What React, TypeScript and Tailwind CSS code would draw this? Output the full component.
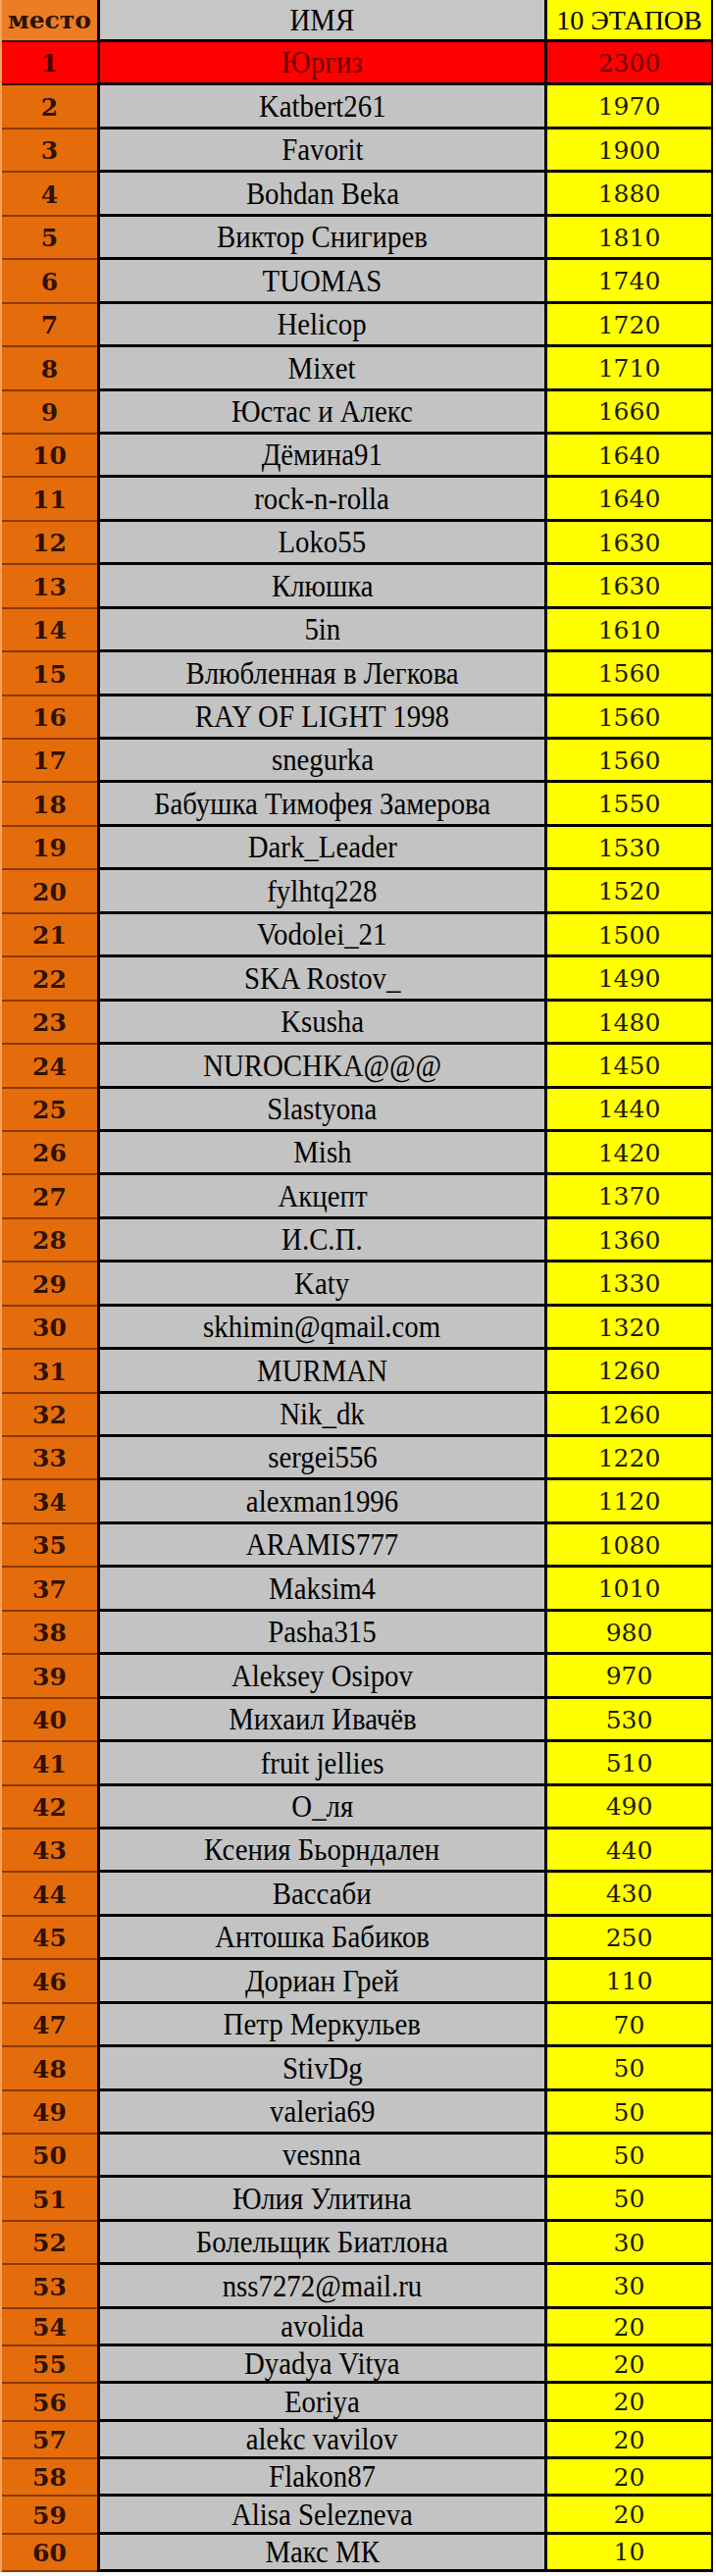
const rows: [number, string, number][] = [
  [1, 'Юргиз', 2300],
  [2, 'Katbert261', 1970],
  [3, 'Favorit', 1900],
  [4, 'Bohdan Beka', 1880],
  [5, 'Виктор Снигирев', 1810],
  [6, 'TUOMAS', 1740],
  [7, 'Helicop', 1720],
  [8, 'Mixet', 1710],
  [9, 'Юстас и Алекс', 1660],
  [10, 'Дёмина91', 1640],
  [11, 'rock-n-rolla', 1640],
  [12, 'Loko55', 1630],
  [13, 'Клюшка', 1630],
  [14, '5in', 1610],
  [15, 'Влюбленная в Легкова', 1560],
  [16, 'RAY OF LIGHT 1998', 1560],
  [17, 'snegurka', 1560],
  [18, 'Бабушка Тимофея Замерова', 1550],
  [19, 'Dark_Leader', 1530],
  [20, 'fylhtq228', 1520],
  [21, 'Vodolei_21', 1500],
  [22, 'SKA Rostov_', 1490],
  [23, 'Ksusha', 1480],
  [24, 'NUROCHKA@@@', 1450],
  [25, 'Slastyona', 1440],
  [26, 'Mish', 1420],
  [27, 'Акцепт', 1370],
  [28, 'И.С.П.', 1360],
  [29, 'Katy', 1330],
  [30, 'skhimin@qmail.com', 1320],
  [31, 'MURMAN', 1260],
  [32, 'Nik_dk', 1260],
  [33, 'sergei556', 1220],
  [34, 'alexman1996', 1120],
  [35, 'ARAMIS777', 1080],
  [37, 'Maksim4', 1010],
  [38, 'Pasha315', 980],
  [39, 'Aleksey Osipov', 970],
  [40, 'Михаил Ивачёв', 530],
  [41, 'fruit jellies', 510],
  [42, 'О_ля', 490],
  [43, 'Ксения Бьорндален', 440],
  [44, 'Вассаби', 430],
  [45, 'Антошка Бабиков', 250],
  [46, 'Дориан Грей', 110],
  [47, 'Петр Меркульев', 70],
  [48, 'StivDg', 50],
  [49, 'valeria69', 50],
  [50, 'vesnna', 50],
  [51, 'Юлия Улитина', 50],
  [52, 'Болельщик Биатлона', 30],
  [53, 'nss7272@mail.ru', 30],
  [54, 'avolida', 20],
  [55, 'Dyadya Vitya', 20],
  [56, 'Eoriya', 20],
  [57, 'alekc vavilov', 20],
  [58, 'Flakon87', 20],
  [59, 'Alisa Selezneva', 20],
  [60, 'Макс МК', 10],
];

function Row({ place, name, score }: { place: number; name: string; score: number }) {
  const leader = place === 1;
  const small = place >= 54;
  return (
    <div className={`flex ${small ? 'h-[38.3px]' : 'h-[44.45px]'}`}>
      {/* место */}
      <div
        className={`w-[97px] flex items-center justify-center pt-[2px] border-b-2 font-['DejaVu_Serif',serif] font-bold text-[25px] ${
          leader ? 'bg-[#fe0000] border-[#3a0000] text-[#4a0000]' : 'bg-[#e46c0a] border-[#8a3a05] text-[#2e1204]'
        }`}
      >
        {place}
      </div>
      <div className="w-[3px] bg-black" />
      {/* имя */}
      <div
        className={`flex-1 flex items-center justify-center pt-[2px] border-b-[3px] border-black text-[31px] ${
          leader ? 'bg-[#fe0000] text-[#6b0000]' : 'bg-[#c3c3c3] text-black'
        }`}
      >
        <span className="inline-block whitespace-nowrap scale-x-[0.93]">{name}</span>
      </div>
      <div className="w-[3px] bg-black" />
      {/* очки */}
      <div
        className={`w-[167px] flex items-center justify-center pt-[2px] border-b-[3px] border-black font-['DejaVu_Serif',serif] text-[25px] ${
          leader ? 'bg-[#fe0000] text-[#6b0000]' : 'bg-[#ffff00] text-[#1a1a00]'
        }`}
      >
        {score}
      </div>
      <div className="w-[2px] bg-black" />
    </div>
  );
}

export default function App() {
  return (
    <div className="w-[730px] min-h-[2626px] bg-white font-['Liberation_Serif','DejaVu_Serif',serif]">
      <div className="w-[727px] border-l-2 border-[#f3a560]">
        <div className="flex h-[43px]">
          <div className="w-[97px] flex items-center justify-center border-b-2 border-[#3a1500] bg-[#ec7d25] font-['DejaVu_Serif',serif] font-bold text-[25px] text-[#2e1204]">
            место
          </div>
          <div className="w-[3px] bg-black" />
          <div className="flex-1 flex items-center justify-center pt-[2px] border-b-[3px] border-black bg-[#c6c6c6] text-[31px] text-black">
            <span className="inline-block scale-x-[0.93]">ИМЯ</span>
          </div>
          <div className="w-[3px] bg-black" />
          <div className="w-[167px] flex items-center justify-center pt-[2px] border-b-[3px] border-black bg-[#ffff00] text-[28px] text-black">
            10 ЭТАПОВ
          </div>
          <div className="w-[2px] bg-black" />
        </div>
        {rows.map(([place, name, score]) => (
          <Row key={place} place={place} name={name} score={score} />
        ))}
      </div>
    </div>
  );
}
